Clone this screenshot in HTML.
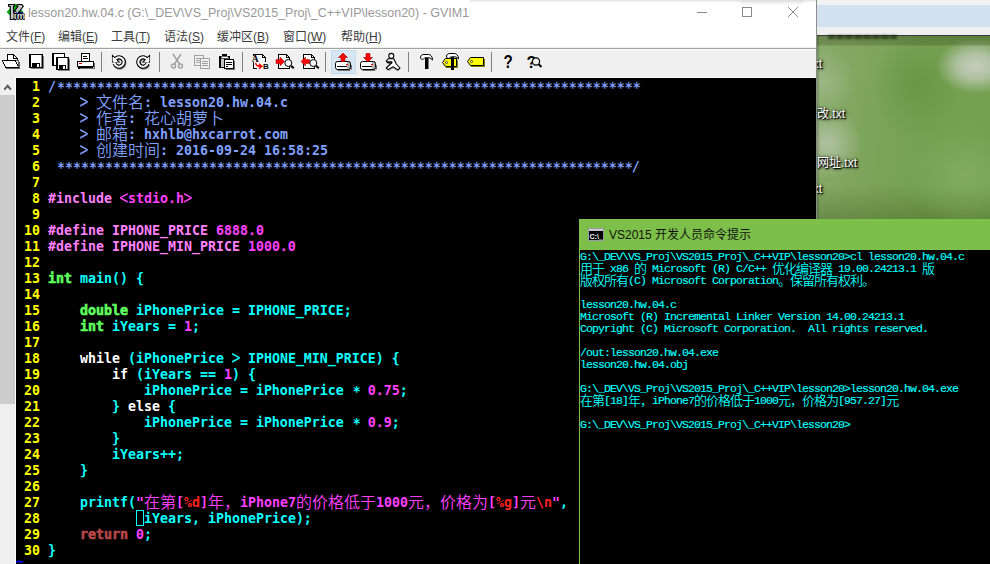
<!DOCTYPE html>
<html><head><meta charset="utf-8">
<style>
*{margin:0;padding:0;box-sizing:border-box}
html,body{width:990px;height:564px;overflow:hidden;background:#000}
body{position:relative;font-family:"Liberation Sans","Noto Sans CJK SC",sans-serif}
.abs{position:absolute}
#desk{left:816px;top:0;width:174px;height:219px;overflow:hidden;background:
linear-gradient(to right,rgba(0,0,0,.3),rgba(0,0,0,0) 4px),
linear-gradient(to bottom,rgba(40,50,20,.3) 36px,rgba(40,50,20,.22) 45px,rgba(0,0,0,0) 46px),
radial-gradient(ellipse 40px 28px at 160px 66px,rgba(200,207,196,.95),rgba(196,205,190,.75) 45%,rgba(185,200,175,0) 100%),
radial-gradient(ellipse 34px 36px at 12px 143px,rgba(182,196,170,.9),rgba(170,190,152,.5) 55%,rgba(150,180,120,0) 100%),
radial-gradient(ellipse 34px 34px at 6px 82px,rgba(160,185,140,.8),rgba(145,175,118,0) 100%),
radial-gradient(ellipse 60px 50px at 150px 175px,rgba(135,175,100,.7),rgba(120,170,80,0) 100%),
radial-gradient(ellipse 45px 55px at 100px 85px,rgba(92,142,55,.55),rgba(95,145,55,0) 100%),
linear-gradient(to bottom,rgba(0,0,0,0) 185px,rgba(60,90,30,.35) 219px),linear-gradient(100deg,rgba(170,190,150,.4),rgba(150,175,125,.18) 45%,rgba(0,0,0,0) 70%),
#74a04f}
#vim{left:0;top:0;width:816px;height:564px;background:#000}
#title{left:0;top:0;width:816px;height:27px;background:#fff}
#menu{left:0;top:27px;width:816px;height:21px;background:#fff;border-bottom:1px solid #eee}
#tool{left:0;top:48px;width:816px;height:30px;background:#f0f0f0;border-top:1px solid #a0a0a0;box-shadow:inset 0 1px 0 #fff}
#sb{left:0;top:78px;width:16px;height:486px;background:#f0f0f0}
#ed{left:16px;top:78px;width:800px;height:486px;padding-top:1px;box-shadow:-1px -1px 0 #fff;background:#000;color:#10ffff;
 font-family:"DejaVu Sans Mono","Liberation Mono","Noto Sans CJK SC",monospace;font-weight:bold;font-size:13.29px;line-height:16px;white-space:pre}
#con{left:579px;top:219px;width:411px;height:345px;background:#000;border-left:1px solid #7cc04a}
#ctitle{left:0;top:0;width:411px;height:31px;background:#7cc04a}
#ctext{left:0;top:32px;color:#00ffff;-webkit-text-stroke:0.150px #00ffff;font-family:"Liberation Mono","Noto Sans CJK SC",monospace;font-size:11.500px;letter-spacing:-0.901px;line-height:12px;white-space:pre}
.l{height:16px}
#ctext .l{height:12px}
.n{color:#ffff00}.c{color:#80a0ff}.p{color:#ff80ff}.m{color:#ff40ff}.t{color:#60ff60;-webkit-text-stroke:0.600px #60ff60}.w{color:#fff}.r{color:#ff2020}.b{color:#b84848;-webkit-text-stroke:0.600px #b84848}.tl{color:#0000ff;position:relative;top:-5px}
#ed .z{font-size:16px;font-weight:350;display:inline-block;height:16px;line-height:16px;vertical-align:top}
#ctext .z{font-size:13px;font-weight:350;-webkit-text-stroke:0;letter-spacing:-1px;position:relative;top:1px;display:inline-block;height:12px;line-height:12px;vertical-align:top}
.cur{display:inline-block;width:8px;height:16px;border:1px solid #10ffff;vertical-align:top;position:relative;top:-1px}

.ttxt{left:28px;top:5px;font-size:12.500px;line-height:16px;color:#999;white-space:pre}
#menu span{position:absolute;top:2px;font-size:12px;line-height:17px;color:#3c3c3c;white-space:pre}
.thumb{left:0;top:17px;width:15px;height:309px;background:#cdcdcd}
.cttxt{left:29px;top:8px;font-size:12px;line-height:17px;color:#111;white-space:pre}
.dl{font-size:12px;line-height:16px;color:#fff;white-space:pre;text-shadow:1px 1px 1px #000,1px 1px 3px #000,0 0 3px rgba(0,0,0,.7)}
.st{position:relative;top:1px;left:1px}
.g{display:inline-block;font-weight:normal;transform:scale(1.100,1.450);transform-origin:50% 58%}
</style></head><body>
<div id="desk" class="abs"><div class="abs" style="left:0;top:0;width:174px;height:5px;background:#f2f2f2"></div><div class="abs" style="left:0;top:5px;width:174px;height:22px;background:#d2e0ef"></div><div class="abs" style="left:0;top:27px;width:174px;height:9px;background:#efefef;border-bottom:1px solid #3a3a3a"></div><div class="abs" style="left:12px;top:35px;width:69px;height:4px;background:repeating-linear-gradient(to right,rgba(15,25,5,.6) 0 6px,rgba(15,25,5,.35) 6px 9px);filter:blur(.8px)"></div>
<div class="abs dl" style="left:-10px;top:56px">.txt</div><div class="abs dl" style="left:-11px;top:106px">修改.txt</div><div class="abs dl" style="left:1px;top:155px">网址.txt</div><div class="abs dl" style="left:-10px;top:181px">.txt</div></div>
<div id="vim" class="abs">
 <div id="title" class="abs"><div class="abs" style="left:470px;top:0;width:346px;height:3px;background:linear-gradient(to bottom,#e2e2e2,#fff)"></div><div class="abs" style="left:740px;top:0;width:64px;height:5px;border-radius:0 0 8px 8px;background:linear-gradient(to bottom,#dcdcdc,#fff)"></div>
  <svg class="abs" style="left:5px;top:3px" width="20" height="20" viewBox="0 0 20 20"><g transform="translate(-5,-3)"><path d="M15 3.500L23.500 12L15 20.500L6.500 12Z" fill="#00b000"/><path d="M15 20.500L23.500 12L19 12L12 17.500Z" fill="#0000a0"/><path d="M8.500 4.500H14.500V6.200H13.500V12.500L18 6.200H17V4.500H21.800L23.300 6.300L13 19.500H10.300V6.200H8.500Z" fill="#c8c8c8" stroke="#000" stroke-width="1.100"/><text x="13.800" y="19.300" font-family="Liberation Sans,sans-serif" font-weight="bold" font-size="9.500" fill="#e0e0e0" stroke="#000" stroke-width="1.600" stroke-linejoin="round" paint-order="stroke" letter-spacing="0.3">im</text></g></svg>
  <div class="abs ttxt">lesson20.hw.04.c (G:\_DEV\VS_Proj\VS2015_Proj\_C++VIP\lesson20) - GVIM1</div>
  <svg class="abs" style="left:690px;top:0" width="126" height="27" viewBox="690 0 126 27" fill="none" stroke="#8a8a8a" stroke-width="1"><path d="M697 12.500H707" shape-rendering="crispEdges"/><rect x="742.500" y="7.500" width="9" height="9" shape-rendering="crispEdges"/><path d="M788 7L798 17M798 7L788 17"/></svg>
 </div>
 <div id="menu" class="abs"><span style="left:6px">文件(<u>F</u>)</span><span style="left:58px">编辑(<u>E</u>)</span><span style="left:111px">工具(<u>T</u>)</span><span style="left:164px">语法(<u>S</u>)</span><span style="left:217px">缓冲区(<u>B</u>)</span><span style="left:283px">窗口(<u>W</u>)</span><span style="left:341px">帮助(<u>H</u>)</span></div>
 <div id="tool" class="abs"></div>
<svg class="abs" style="left:0;top:48px" width="816" height="30" viewBox="0 48 816 30" shape-rendering="crispEdges">
<g stroke="#808080" stroke-width="1"><path d="M101.5 52V72M159.5 52V72M242.5 52V72M325.5 52V72M408.5 52V72M491.5 52V72"/></g>
<rect x="331.5" y="50.500" width="24" height="23" fill="#d8e6f2" stroke="#c0dcf3"/>
<!-- open -->
<g transform="translate(2,54)" stroke="#000" fill="#fff">
<path d="M5.500 6.500V0.500H11.500L15.500 4.500V7" />
<path d="M11.500 0.500V4.500H15.500" fill="none"/>
<path d="M0.500 6.500H13.500L16.500 13.500H3.500Z"/>
<path d="M14 6H16.500V13M4 14.500H17.500V8" fill="none" stroke="#606060"/>
</g>
<!-- save -->
<g transform="translate(29,54)"><rect x="0.500" y="0.500" width="13" height="13" fill="#fff" stroke="#000"/><rect x="1" y="1" width="1" height="12" fill="#000"/><rect x="12" y="1" width="1" height="12" fill="#888"/><rect x="14" y="2" width="1" height="13" fill="#808080"/><rect x="2" y="14" width="13" height="1" fill="#808080"/><rect x="3" y="9" width="8" height="5" fill="#000"/><rect x="8" y="10" width="2" height="3" fill="#fff"/></g>
<!-- save all -->
<g transform="translate(52,53)"><rect x="0.500" y="0.500" width="12" height="12" fill="#fff" stroke="#000"/><rect x="1" y="1" width="1" height="11" fill="#000"/>
<g transform="translate(4,4)"><rect x="0.500" y="0.500" width="12" height="12" fill="#fff" stroke="#000"/><rect x="1" y="1" width="1" height="11" fill="#000"/><rect x="11" y="1" width="1" height="11" fill="#888"/><rect x="13" y="2" width="1" height="12" fill="#808080"/><rect x="2" y="13" width="12" height="1" fill="#808080"/><rect x="3" y="8" width="7" height="5" fill="#000"/><rect x="7" y="9" width="2" height="3" fill="#fff"/></g></g>
<!-- print -->
<g transform="translate(77,53)" stroke="#000" fill="#fff"><path d="M4.500 8V0.500H12.500V8"/><path d="M6 3.500H10M6 5.500H11" fill="none"/><rect x="0.500" y="8.500" width="16" height="5"/><rect x="1.500" y="13.500" width="14" height="2" fill="#000"/><rect x="2" y="10" width="3" height="1" fill="#f00" stroke="none"/><path d="M17.500 10V15.500H3" stroke="#707070" fill="none"/></g>
<!-- undo / redo -->
<g shape-rendering="auto" fill="none" stroke-linecap="butt">
<g transform="translate(118.500,61.500)"><path d="M-2.82 -2.82A4.7 4.7 0 1 1 -3.92 2.11" stroke="#808080" stroke-width="4.200" transform="translate(0.800,0.800)"/><path d="M-6 -6V0.500H0.500Z" fill="#fff" stroke="#000" stroke-width="1.100"/><path d="M-2.82 -2.82A4.7 4.7 0 1 1 -3.92 2.11" stroke="#000" stroke-width="4.200"/><path d="M-2.82 -2.82A4.7 4.7 0 1 1 -3.92 2.11" stroke="#fff" stroke-width="2" stroke-linecap="square"/><path d="M-5.400 -4.500V-0.100H-1" fill="#fff" stroke="#fff" stroke-width="1"/></g>
<g transform="translate(143.500,61.500) scale(-1,1)"><path d="M-2.82 -2.82A4.7 4.7 0 1 1 -3.92 2.11" stroke="#808080" stroke-width="4.200" transform="translate(-0.800,0.800)"/><path d="M-6 -6V0.500H0.500Z" fill="#fff" stroke="#000" stroke-width="1.100"/><path d="M-2.82 -2.82A4.7 4.7 0 1 1 -3.92 2.11" stroke="#000" stroke-width="4.200"/><path d="M-2.82 -2.82A4.7 4.7 0 1 1 -3.92 2.11" stroke="#fff" stroke-width="2" stroke-linecap="square"/><path d="M-5.400 -4.500V-0.100H-1" fill="#fff" stroke="#fff" stroke-width="1"/></g>
</g>
<!-- cut (disabled) -->
<g shape-rendering="auto" fill="none" stroke="#a0a0a0" stroke-width="1.400" transform="translate(171,54)"><path d="M2 0L8.500 10M10 0L3.500 10"/><circle cx="2.500" cy="12" r="2"/><circle cx="9.500" cy="12" r="2"/></g>
<!-- copy (disabled) -->
<g transform="translate(194,55)" stroke="#a0a0a0" fill="#f0f0f0"><rect x="0.500" y="0.500" width="9" height="10"/><path d="M2 3.500H8M2 5.500H8M2 7.500H8"/><rect x="6.500" y="3.500" width="9" height="10"/><path d="M8 6.500H14M8 8.500H14M8 10.500H14"/></g>
<!-- paste -->
<g transform="translate(219,54)"><rect x="0.500" y="2.500" width="10" height="11" fill="#c4c4c4" stroke="#000"/><rect x="1" y="3" width="1" height="10" fill="#000"/><rect x="3" y="0" width="5" height="2" fill="#000"/><rect x="2" y="2" width="7" height="2" fill="#fff" stroke="#000" stroke-width="0.600"/><rect x="5.500" y="5.500" width="9" height="9" fill="#fff" stroke="#000"/><path d="M7 8.500H13M7 10.500H13M7 12.500H9" stroke="#000"/><path d="M15.500 7V15.500H7" fill="none" stroke="#707070"/></g>
<!-- replace -->
<g transform="translate(252,54)"><path d="M5 14.500H1.500V0.500H10.500L13.500 3.500V8" fill="#fff" stroke="#000"/><path d="M10.500 0.500V3.500H13.500" fill="none" stroke="#000"/><rect x="0" y="2" width="8" height="6" fill="#f0f0f0"/><text x="-0.300" y="7.800" font-family="Liberation Serif,serif" font-weight="bold" font-size="9.500" fill="#000" shape-rendering="auto">A</text><text x="11" y="14.600" font-family="Liberation Sans,sans-serif" font-weight="bold" font-size="8" fill="#000">B</text><path d="M3.500 9C4.500 12 6 12.200 9 12.200M7 9.700L9.800 12.200L7 14.700" fill="none" stroke="#f00" stroke-width="1.500" shape-rendering="auto"/></g>
<!-- find next -->
<g transform="translate(276,54)"><path d="M2.500 14.500V0.500H10.500L13.500 3.500V14.500Z" fill="#fff" stroke="#000"/><path d="M10.500 0.500V3.500H13.500" fill="none" stroke="#000"/><path d="M0 5.500H4V3L8.500 7.500L4 12V9.500H0Z" fill="#f00" stroke="#a00000" stroke-width="0.500" shape-rendering="auto"/><circle cx="12.300" cy="9" r="3.500" fill="#f4f4f4" stroke="#000" shape-rendering="auto"/><path d="M15 11.800L17.800 14.300" stroke="#000" stroke-width="2" shape-rendering="auto"/></g>
<!-- find prev -->
<g transform="translate(301,54)"><path d="M2.500 14.500V0.500H10.500L13.500 3.500V14.500Z" fill="#fff" stroke="#000"/><path d="M10.500 0.500V3.500H13.500" fill="none" stroke="#000"/><path d="M8.500 5.500H4.500V3L0 7.500L4.500 12V9.500H8.500Z" fill="#f00" stroke="#a00000" stroke-width="0.500" shape-rendering="auto"/><circle cx="12.300" cy="9" r="3.500" fill="#f4f4f4" stroke="#000" shape-rendering="auto"/><path d="M15 11.800L17.800 14.300" stroke="#000" stroke-width="2" shape-rendering="auto"/></g>
<!-- load session -->
<g transform="translate(335,53)"><rect x="1" y="9" width="14" height="7" fill="#fff"/><path d="M13 9V16.500" stroke="#b0b0b0" stroke-width="3" /><rect x="0.500" y="8.500" width="15" height="8" rx="2" fill="none" stroke="#000" shape-rendering="auto"/><path d="M2 13.500H12" stroke="#000"/><rect x="11" y="10.500" width="2" height="1" fill="#f00"/><path d="M2.500 17.500H15L16.500 16V12" fill="none" stroke="#707070" shape-rendering="auto"/><path d="M8 0L12.500 4.500H10V8.500H6V4.500H3.500Z" fill="#f00" stroke="#a00000" stroke-width="0.600" shape-rendering="auto"/></g>
<!-- save session -->
<g transform="translate(360,53)"><rect x="1" y="9" width="14" height="7" fill="#fff"/><path d="M13 9V16.500" stroke="#b0b0b0" stroke-width="3" /><rect x="0.500" y="8.500" width="15" height="8" rx="2" fill="none" stroke="#000" shape-rendering="auto"/><path d="M2 13.500H12" stroke="#000"/><rect x="11" y="10.500" width="2" height="1" fill="#f00"/><path d="M2.500 17.500H15L16.500 16V12" fill="none" stroke="#707070" shape-rendering="auto"/><path d="M8 9L12.500 4.500H10V0.500H6V4.500H3.500Z" fill="#f00" stroke="#a00000" stroke-width="0.600" shape-rendering="auto"/></g>
<!-- run -->
<g transform="translate(386,53)" shape-rendering="auto" stroke="#000" fill="#fff" stroke-width="1.100" stroke-linejoin="round"><path d="M2.200 5.800L0.200 8.200L1.800 10H5.500L0.300 15L2 16.800L7 13.800L12 17L14 15L10.300 11L7.800 5.800Z"/><path d="M1.200 9H5.800V10.200" fill="none" stroke-width="1.300"/><circle cx="5.300" cy="2.900" r="2.500"/><path d="M3 17.700L7 15L11.500 17.900" fill="none" stroke="#909090" stroke-width="0.800"/></g>
<!-- hammer -->
<g transform="translate(420,54)"><rect x="5" y="4" width="3.500" height="11" fill="#000" shape-rendering="auto"/><path d="M1.200 5C0.300 4 0.300 2 1.500 1.200C2.200 0.700 3 0.500 4 0.500H8.500C10.800 0.700 12.500 2.500 12.500 6L11 4.600C10.200 4 9.500 3.800 9 3.800H5.500C4.500 3.800 4 4.300 3.500 4.900C2.800 5.600 1.800 5.600 1.200 5Z" fill="#fff" stroke="#000" shape-rendering="auto"/><rect x="8" y="5" width="1" height="10" fill="#808080"/></g>
<!-- tag build -->
<g transform="translate(442,53)"><path d="M0.500 9.500L3.500 5.500H14.500V13.500H3.500Z" fill="#ff0" stroke="#000" shape-rendering="auto"/><circle cx="4.500" cy="9.500" r="1" fill="#fff" stroke="#000" stroke-width="0.700" shape-rendering="auto"/><path d="M4 14.500H15.500V7" fill="none" stroke="#808000"/><rect x="9" y="4" width="3" height="13" fill="#000"/><path d="M5.200 5C4.300 4 4.300 2 5.500 1.200C6.200 0.700 7 0.500 8 0.500H12.500C14.800 0.700 16.500 2.500 16.500 6L15 4.600C14.200 4 13.500 3.800 13 3.800H9.500C8.500 3.800 8 4.300 7.500 4.900C6.800 5.600 5.800 5.600 5.200 5Z" fill="#fff" stroke="#000" shape-rendering="auto"/></g>
<!-- tag jump -->
<g transform="translate(467,57)"><path d="M0.500 4.500L3.500 0.500H16.500V8.500H3.500Z" fill="#ff0" stroke="#000" shape-rendering="auto"/><circle cx="4.500" cy="4.500" r="1" fill="#fff" stroke="#000" stroke-width="0.700" shape-rendering="auto"/><path d="M4 9.500H17.500V2" fill="none" stroke="#808000"/></g>
<!-- help -->
<text transform="translate(503.500,68.300) scale(0.840,1)" font-family="Liberation Sans,sans-serif" font-weight="bold" font-size="18" fill="#000" shape-rendering="auto">?</text>
<!-- find help -->
<g shape-rendering="auto"><text x="526.500" y="68" font-family="Liberation Sans,sans-serif" font-weight="bold" font-size="16" fill="#000">?</text><circle cx="536" cy="61.500" r="3.600" fill="#f0f0f0" stroke="#000" stroke-width="1.200"/><path d="M538.700 64.300L541.500 67" stroke="#000" stroke-width="2"/></g>
</svg>

 <div id="sb" class="abs"><svg class="abs" style="left:0;top:0" width="16" height="17" viewBox="0 0 16 17"><path d="M4.300 11.700L7.600 7.800L10.900 11.700" fill="none" stroke="#5a5a5a" stroke-width="2"/></svg><div class="abs thumb"></div></div>
 <div id="ed" class="abs"><div class="l"><span class="n">  1 </span><span class="c">/<span class="st">*************************************************************************</span></span></div><div class="l"><span class="n">  2 </span><span class="c">    <span class="g">&gt;</span> <span class="z">文件名</span>: lesson20.hw.04.c</span></div><div class="l"><span class="n">  3 </span><span class="c">    <span class="g">&gt;</span> <span class="z">作者</span>: <span class="z">花心胡萝卜</span></span></div><div class="l"><span class="n">  4 </span><span class="c">    <span class="g">&gt;</span> <span class="z">邮箱</span>: hxhlb@hxcarrot.com</span></div><div class="l"><span class="n">  5 </span><span class="c">    <span class="g">&gt;</span> <span class="z">创建时间</span>: 2016-09-24 16:58:25</span></div><div class="l"><span class="n">  6 </span><span class="c"> <span class="st">************************************************************************</span>/</span></div><div class="l"><span class="n">  7 </span></div><div class="l"><span class="n">  8 </span><span class="p">#include </span><span class="m"><span class="g">&lt;</span>stdio.h<span class="g">&gt;</span></span></div><div class="l"><span class="n">  9 </span></div><div class="l"><span class="n"> 10 </span><span class="p">#define IPHONE_PRICE </span><span class="m">6888.0</span></div><div class="l"><span class="n"> 11 </span><span class="p">#define IPHONE_MIN_PRICE </span><span class="m">1000.0</span></div><div class="l"><span class="n"> 12 </span></div><div class="l"><span class="n"> 13 </span><span class="t">int</span> main() {</div><div class="l"><span class="n"> 14 </span></div><div class="l"><span class="n"> 15 </span>    <span class="t">double</span> iPhonePrice = IPHONE_PRICE;</div><div class="l"><span class="n"> 16 </span>    <span class="t">int</span> iYears = <span class="m">1</span>;</div><div class="l"><span class="n"> 17 </span></div><div class="l"><span class="n"> 18 </span>    <span class="w">while</span> (iPhonePrice <span class="g">&gt;</span> IPHONE_MIN_PRICE) {</div><div class="l"><span class="n"> 19 </span>        <span class="w">if</span> (iYears == <span class="m">1</span>) {</div><div class="l"><span class="n"> 20 </span>            iPhonePrice = iPhonePrice <span class="st">*</span> <span class="m">0.75</span>;</div><div class="l"><span class="n"> 21 </span>        } <span class="w">else</span> {</div><div class="l"><span class="n"> 22 </span>            iPhonePrice = iPhonePrice <span class="st">*</span> <span class="m">0.9</span>;</div><div class="l"><span class="n"> 23 </span>        }</div><div class="l"><span class="n"> 24 </span>        iYears++;</div><div class="l"><span class="n"> 25 </span>    }</div><div class="l"><span class="n"> 26 </span></div><div class="l"><span class="n"> 27 </span>    printf(<span class="m">"<span class="z">在第</span>[</span><span class="r">%d</span><span class="m">]<span class="z">年，</span>iPhone7<span class="z">的价格低于</span>1000<span class="z">元，</span><span class="z">价格为</span>[</span><span class="r">%g</span><span class="m">]<span class="z">元</span></span><span class="r">\n</span><span class="m">"</span>,</div><div class="l"><span class="n"> 28 </span>           <span class="cur"> </span>iYears, iPhonePrice);</div><div class="l"><span class="n"> 29 </span>    <span class="b">return</span> <span class="m">0</span>;</div><div class="l"><span class="n"> 30 </span>}</div><div class="l"><span class="tl">~</span></div></div>
</div>
<div class="abs" style="left:816px;top:0;width:1px;height:219px;background:#8c8c8c"></div>
<div id="con" class="abs">
 <div id="ctitle" class="abs"><svg class="abs" style="left:8px;top:9px" width="16" height="13" viewBox="0 0 16 13" shape-rendering="crispEdges"><rect x="0" y="0" width="16" height="13" fill="#000"/><rect x="0.500" y="0.500" width="15" height="12" fill="none" stroke="#9a9aa8"/><rect x="1" y="1" width="14" height="2" fill="#c8c8d0"/><text x="1.500" y="10.500" font-family="Liberation Sans,sans-serif" font-size="7" font-weight="bold" fill="#fff" shape-rendering="auto">C:\_</text></svg><div class="abs cttxt">VS2015 开发人员命令提示</div></div>
 <div id="ctext" class="abs"><div class="l">G:\_DEV\VS_Proj\VS2015_Proj\_C++VIP\lesson20&gt;cl lesson20.hw.04.c</div><div class="l"><span class="z">用于</span> x86 <span class="z">的</span> Microsoft (R) C/C++ <span class="z">优化编译器</span> 19.00.24213.1 <span class="z">版</span></div><div class="l"><span class="z">版权所有</span>(C) Microsoft Corporation<span class="z">。保留所有权利。</span></div><div class="l"></div><div class="l">lesson20.hw.04.c</div><div class="l">Microsoft (R) Incremental Linker Version 14.00.24213.1</div><div class="l">Copyright (C) Microsoft Corporation.  All rights reserved.</div><div class="l"></div><div class="l">/out:lesson20.hw.04.exe</div><div class="l">lesson20.hw.04.obj</div><div class="l"></div><div class="l">G:\_DEV\VS_Proj\VS2015_Proj\_C++VIP\lesson20&gt;lesson20.hw.04.exe</div><div class="l"><span class="z">在第</span>[18]<span class="z">年，</span>iPhone7<span class="z">的价格低于</span>1000<span class="z">元，价格为</span>[957.27]<span class="z">元</span></div><div class="l"></div><div class="l">G:\_DEV\VS_Proj\VS2015_Proj\_C++VIP\lesson20&gt;</div></div>
</div>
</body></html>
